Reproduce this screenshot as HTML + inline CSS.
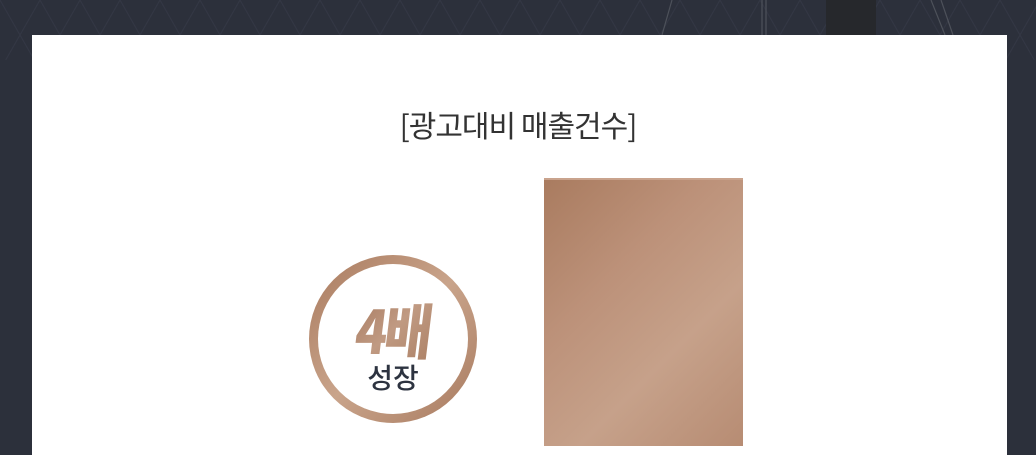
<!DOCTYPE html>
<html><head><meta charset="utf-8"><style>
html,body{margin:0;padding:0;}
body{width:1036px;height:446px;overflow:hidden;position:relative;background:#2c303b;font-family:"Liberation Sans","Noto Sans CJK KR",sans-serif;}
.bg{position:absolute;left:0;top:0;}
.card{position:absolute;left:32px;top:35px;width:975px;height:420px;background:#fff;}
.title{position:absolute;left:0;width:1036px;top:102px;text-align:center;font-size:30px;color:#333;font-weight:400;letter-spacing:-1px;font-family:"Noto Sans CJK KR",sans-serif;}
.ring{position:absolute;left:309px;top:255px;width:168px;height:168px;border-radius:50%;background:linear-gradient(135deg,#a97a5e,#c9a48b 50%,#a87a5f);}
.ring::after{content:"";position:absolute;left:9px;top:9px;right:9px;bottom:9px;border-radius:50%;background:#fff;}
.big{position:absolute;left:313px;width:160px;top:289px;text-align:center;font-size:60px;font-weight:900;line-height:80px;z-index:2;background:linear-gradient(135deg,#9c6c52,#c09a82 50%,#a47659);-webkit-background-clip:text;background-clip:text;color:transparent;letter-spacing:-4px;transform:scaleX(0.88) skewX(-8deg);font-family:"Noto Sans CJK KR",sans-serif;}
.small{position:absolute;left:313px;width:160px;top:357px;text-align:center;font-size:28px;line-height:40px;color:#2d3340;z-index:2;font-weight:500;font-family:"Noto Sans CJK KR",sans-serif;}
.bar{position:absolute;left:544px;top:178px;width:199px;height:268px;background:linear-gradient(135deg,#a97b5f 0%,#bc9179 35%,#c6a18a 65%,#b78c73 100%);}
.bar::before{content:"";position:absolute;left:0;right:0;top:0;height:2px;background:#c9a38d;}
</style></head><body>
<svg class="bg" width="1036" height="60">
<defs><pattern id="p" width="40" height="70" patternUnits="userSpaceOnUse">
<path d="M0 0 L20 35 L0 70 M40 0 L20 35 L40 70" stroke="#333744" stroke-width="1" fill="none"/></pattern></defs>
<rect width="1036" height="60" fill="url(#p)"/>
<path d="M672 0 L662 35 M762 0 L762 35 M766 0 L766 35 M931 0 L945 35 M941 0 L953 35" stroke="#4d515a" stroke-width="1.2" fill="none"/>
<rect x="826" y="0" width="50" height="35" fill="#26282c"/>
</svg>
<div class="card"></div>
<div class="title">[광고대비 매출건수]</div>
<div class="ring"></div>
<div class="big">4배</div>
<div class="small">성장</div>
<div class="bar"></div>
</body></html>
